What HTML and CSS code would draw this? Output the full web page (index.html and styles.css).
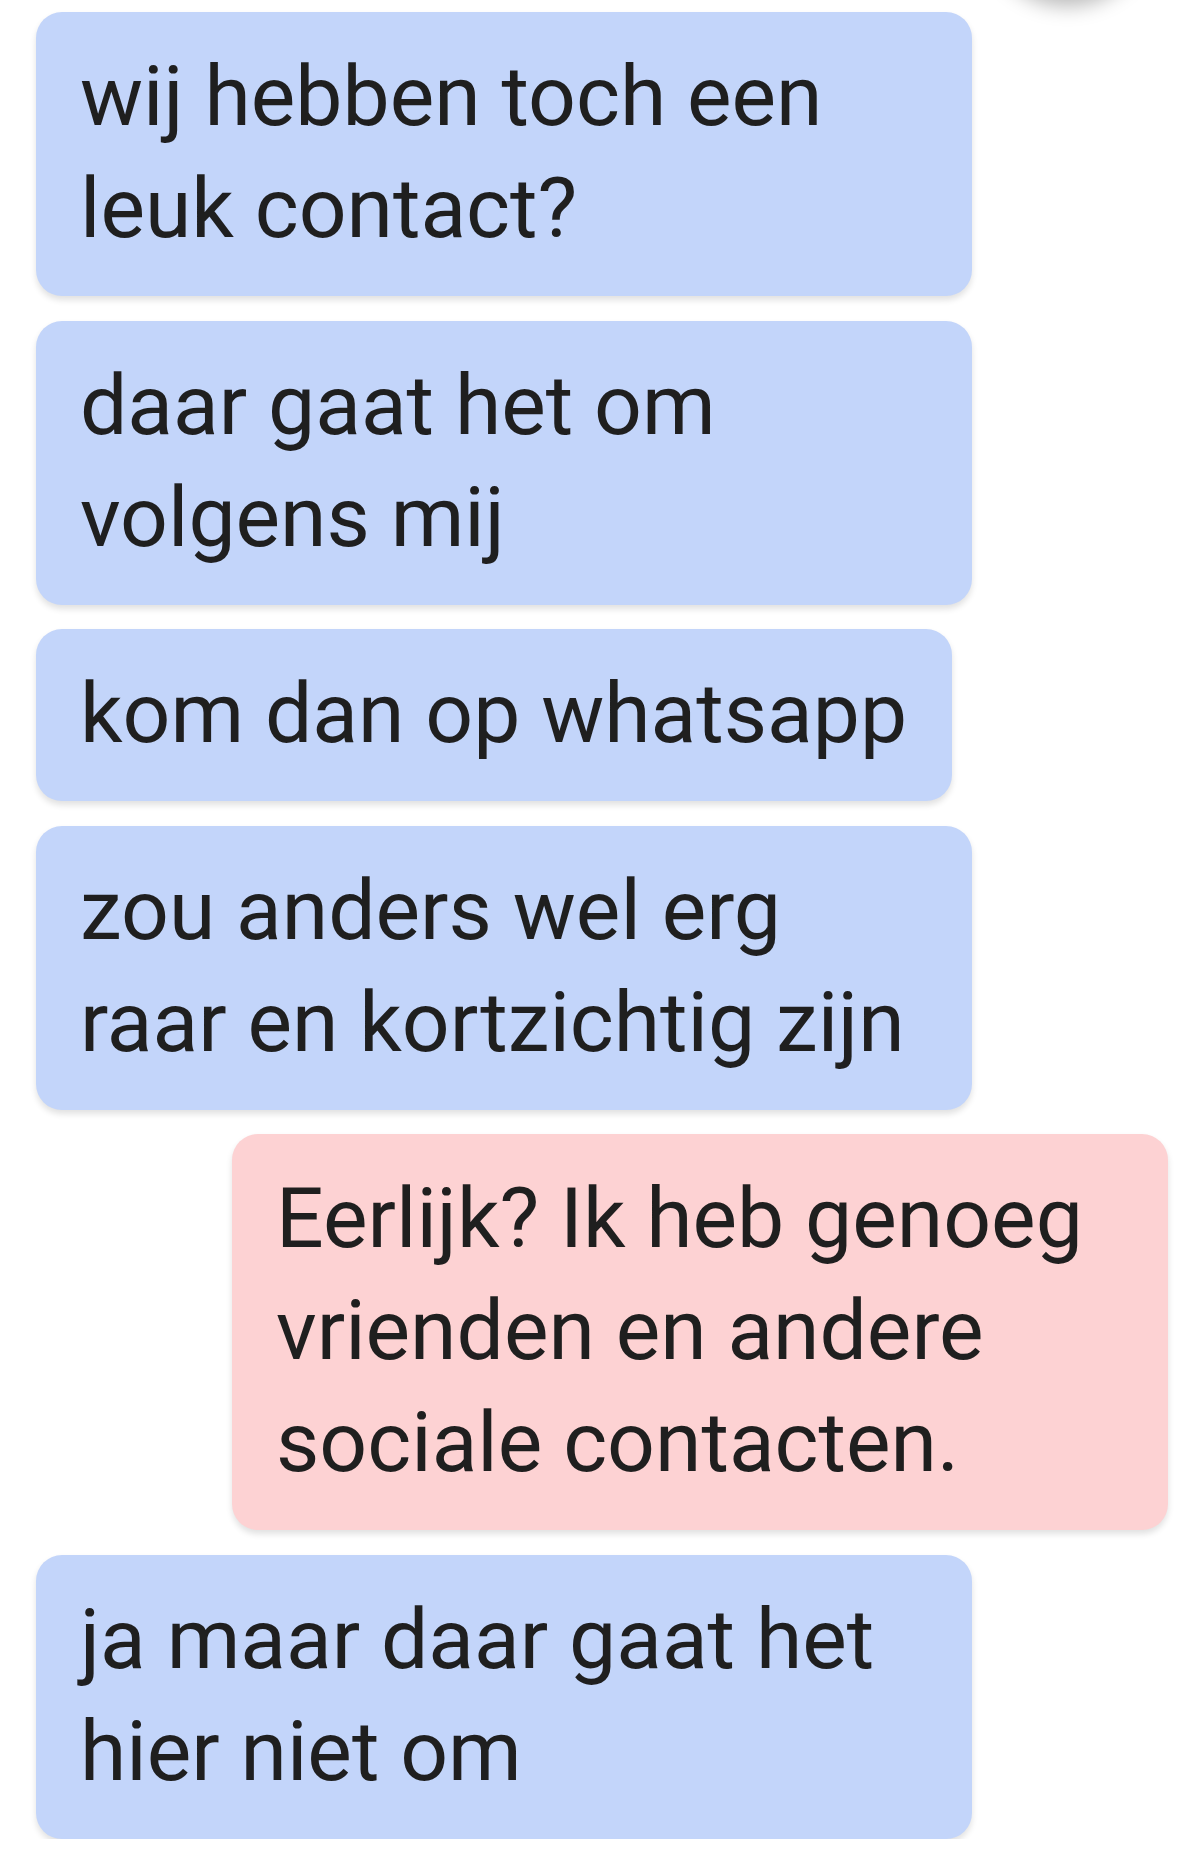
FILE: index.html
```html
<!DOCTYPE html>
<html lang="nl">
  <head>
    <meta charset="UTF-8" />
    <meta name="viewport" content="width=device-width, initial-scale=1.0" />
    <title>Chat</title>
    <link rel="stylesheet" href="styles.css">
  </head>
  <body>
    <!-- Floating button peeking in from above -->
    <div class="fab"></div>

    <div class="chat">
      <div class="bubble incoming">wij hebben toch een leuk contact?</div>
      <div class="bubble incoming">daar gaat het om volgens mij</div>
      <div class="bubble incoming">kom dan op whatsapp</div>
      <div class="bubble incoming">zou anders wel erg raar en kortzichtig zijn</div>
      <div class="bubble outgoing">Eerlijk? Ik heb genoeg vrienden en andere sociale contacten.</div>
      <div class="bubble incoming">ja maar daar gaat het hier niet om</div>
    </div>
  </body>
</html>
```

FILE: styles.css
```css
body {
  margin: 0;
  background: #ffffff;
  font-family: Roboto, "Noto Sans", sans-serif;
  color: #1f1f1f;
  overflow: hidden;
}

/* Shadow of a round button that sits above the visible area */
.fab {
  position: absolute;
  top: -160px;
  left: 985px;
  width: 165px;
  height: 160px;
  border-radius: 50%;
  background: #ffffff;
  box-shadow: 0 6px 20px rgba(0, 0, 0, 0.28);
}

.chat {
  display: flex;
  flex-direction: column;
  align-items: flex-start;
  gap: 24.5px;
  padding: 12px 32px 0 36px;
}

.bubble {
  max-width: 847px;
  padding: 29px 45px 31px 44px;
  border-radius: 26px;
  font-size: 84px;
  line-height: 112px;
  box-shadow: 0 4px 6px rgba(0, 0, 0, 0.12);
}

.incoming {
  background: #c3d5fa;
}

.outgoing {
  align-self: flex-end;
  background: #fdd2d3;
}
```
